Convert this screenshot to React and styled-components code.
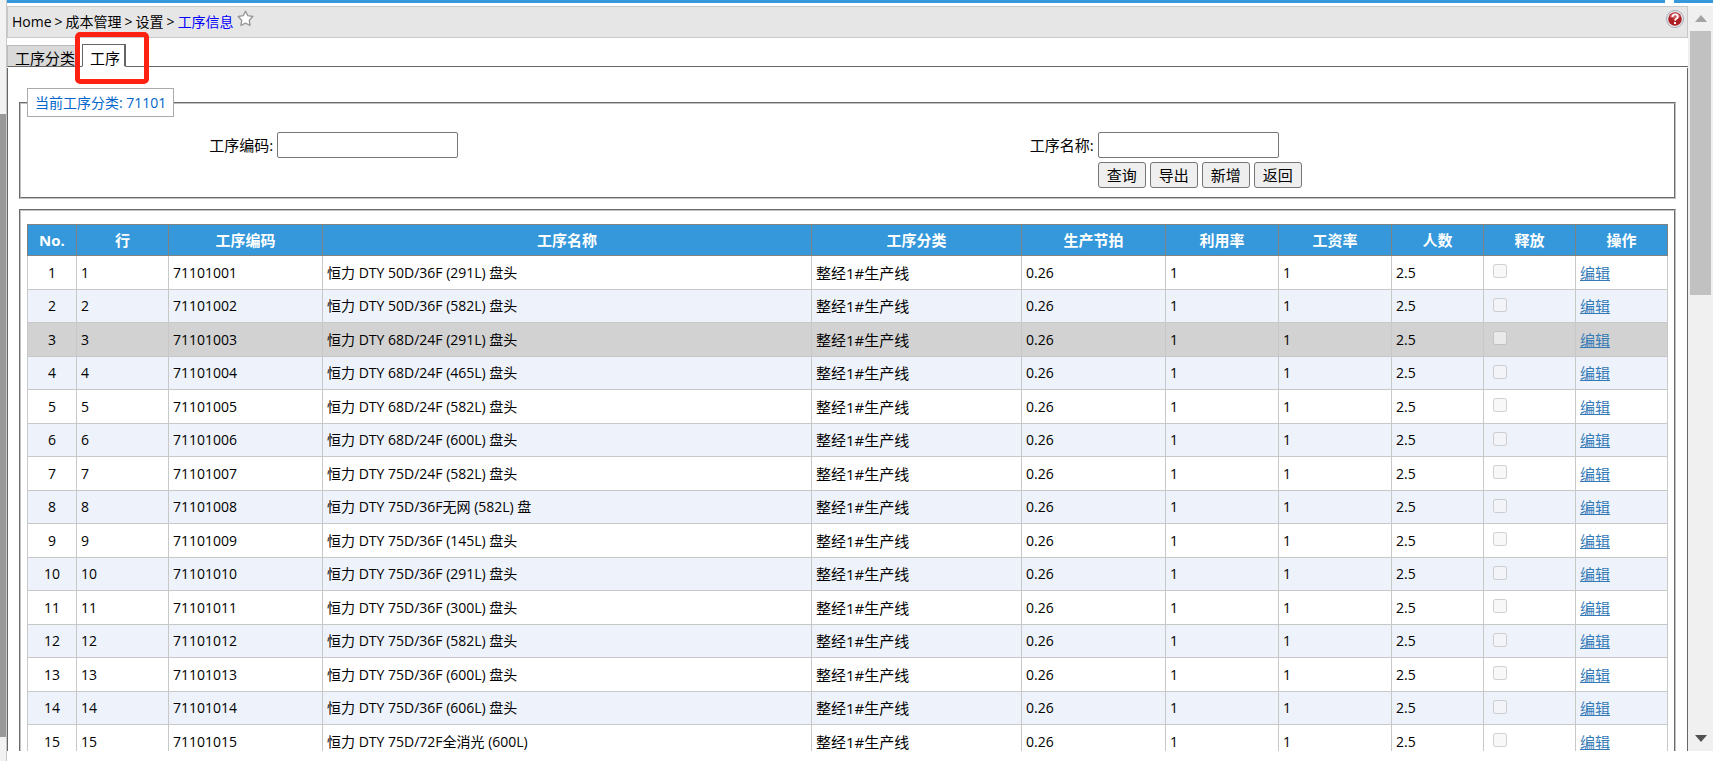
import React from "react";
import styled, { createGlobalStyle, css } from "styled-components";

const Global = createGlobalStyle`
  *, *::before, *::after { box-sizing: border-box; }
  body {
    margin: 0;
    background: #fff;
    color: #000;
    font: 15px/20px "Open Sans", "Noto Sans CJK SC", sans-serif;
    overflow: hidden;
  }
  button, input { font: inherit; color: inherit; }
`;

const Shell = styled.div`
  display: flex;
  height: 100vh;
`;

const SideRail = styled.div`
  flex: none;
  width: 7px;
  display: flex;
  flex-direction: column;
  background: #f2f2f2;
  border-right: 1px solid #c8c8c8;
  padding: 114px 0 24px;
`;

const SideThumb = styled.div`
  flex: 1;
  background: #999;
`;

const Main = styled.div`
  flex: 1;
  min-width: 0;
  display: flex;
  flex-direction: column;
  padding-bottom: 10px;
`;

const TopStrip = styled.div`
  flex: none;
  display: flex;
  gap: 9px;
  height: 3px;
  margin-bottom: 3px;
`;

const StripPart = styled.span`
  flex: ${(p) => (p.$end ? "0 0 39px" : "1")};
  background: #3498db;
`;

const Frame = styled.div`
  flex: 1;
  min-height: 0;
  display: flex;
`;

const Page = styled.div`
  flex: 1;
  min-width: 0;
  display: flex;
  flex-direction: column;
  overflow: hidden;
`;

const CrumbBar = styled.header`
  flex: none;
  display: flex;
  justify-content: space-between;
  height: 32px;
  padding: 3px 3px 3px 4px;
  background: #e6e6e6;
  border: 1px solid #c8c8c8;
`;

const Crumbs = styled.nav`
  display: flex;
  align-items: center;
  gap: 3px;
  font-size: 14px;
`;

const Crumb = styled.a`
  color: ${(p) => (p.$current ? "#00f" : "#000")};
  text-decoration: none;
`;

const IconButton = styled.button`
  display: flex;
  padding: 0;
  border: 0;
  background: none;
  align-self: flex-start;
`;

const Tabs = styled.div`
  flex: none;
  display: flex;
  align-items: flex-end;
  height: 29px;
  padding-top: 7px;
`;

const Tab = styled.button`
  height: 22px;
  padding: 4px 0 0 7px;
  border: 1px solid #bbb;
  border-bottom: 1px solid #666;
  background: #d9d9d9;
  white-space: nowrap;
  line-height: 16px;
  ${(p) =>
    p.$active &&
    css`
      height: 23px;
      padding: 4px 4px 0 7px;
      border: 1px solid #666;
      border-right-width: 2px;
      border-bottom-color: #fff;
      background: #fff;
    `}
`;

const TabGap = styled.span`
  width: ${(p) => (p.$wide ? "auto" : "6px")};
  flex: ${(p) => (p.$wide ? "1" : "none")};
  border-bottom: 1px solid #666;
`;

const ActiveMark = styled.span`
  position: relative;
  display: flex;

  &::after {
    content: "";
    position: absolute;
    inset: -12px -23px -17px -7px;
    border: 5px solid #ff2213;
    border-radius: 5px;
    pointer-events: none;
  }
`;

const Panel = styled.main`
  flex: 1;
  min-height: 0;
  margin-top: 1px;
  padding: 20px 11px 0;
  border: solid #666;
  border-width: 0 1px;
  overflow: hidden;
`;

const Group = styled.fieldset`
  min-width: 0;
  margin: 0 0 10px;
  padding: ${(p) => (p.$table ? "13px 6px" : "15px 6px 9px")};
  border: 2px groove #c0c0c0;
`;

const Legend = styled.legend`
  height: 29px;
  padding: 0 7px;
  border: 1px solid #aaa;
  color: #0066cc;
  font-size: 14px;
  line-height: 28px;
`;

const Search = styled.form`
  display: grid;
  grid-template-columns: 3fr 7fr 3fr 7fr;
  row-gap: 4px;
  align-items: center;
`;

const FieldLabel = styled.label`
  text-align: right;
`;

const TextInput = styled.input`
  width: 181px;
  height: 26px;
  margin: 0 0 0 4px;
  border: 1px solid #767676;
  border-radius: 2px;
  background: #fff;
`;

const Actions = styled.div`
  grid-column: 4;
  display: flex;
  gap: 4px;
  margin-left: 4px;
`;

const ActionButton = styled.button`
  width: 48px;
  height: 26px;
  padding: 0;
  border: 1px solid #767676;
  border-radius: 3px;
  background: #efefef;
  line-height: 24px;
`;

const Grid = styled.table`
  width: 100%;
  table-layout: fixed;
  border-collapse: collapse;
`;

const Col = styled.col`
  width: ${(p) => p.$w}px;
`;

const HeadCell = styled.th`
  height: 31px;
  padding: 0;
  border: 1px solid #808080;
  background: #3498db;
  color: #fff;
  font-weight: 700;
`;

const Row = styled.tr`
  height: 34px;
  background: #fff;
  &:nth-child(even) {
    height: 33px;
    background: #eef3fb;
  }
  ${(p) =>
    p.$selected &&
    css`
      background: #d2d2d2;
    `}
`;

const Cell = styled.td`
  padding: 0 4px;
  border: 1px solid #c8c8c8;
  text-align: ${(p) => (p.$center ? "center" : "left")};
  font-size: ${(p) => (p.$latin ? "14px" : "15px")};
  white-space: nowrap;
  overflow: hidden;
`;

const Release = styled.input`
  display: block;
  width: 14px;
  height: 14px;
  margin: 0 0 3px 5px;
`;

const EditLink = styled.a`
  color: #337ab7;
  text-decoration: underline;
`;

const ScrollBar = styled.div`
  flex: none;
  width: 25px;
  display: flex;
  flex-direction: column;
  align-items: center;
  background: #f0f0f0;
`;

const ScrollArrow = styled.button`
  display: flex;
  justify-content: center;
  width: 21px;
  height: 25px;
  padding: 9px 0 0;
  border: 0;
  background: none;
`;

const ScrollTrack = styled.div`
  flex: 1;
  width: 21px;
`;

const ScrollThumb = styled.div`
  height: 38%;
  background: #c1c1c1;
`;

const columns = [
  ["No.", 49], ["行", 92], ["工序编码", 154], ["工序名称", 489], ["工序分类", 210],
  ["生产节拍", 144], ["利用率", 113], ["工资率", 113], ["人数", 92], ["释放", 92], ["操作", 92],
];

const names = [
  "恒力 DTY 50D/36F (291L) 盘头",
  "恒力 DTY 50D/36F (582L) 盘头",
  "恒力 DTY 68D/24F (291L) 盘头",
  "恒力 DTY 68D/24F (465L) 盘头",
  "恒力 DTY 68D/24F (582L) 盘头",
  "恒力 DTY 68D/24F (600L) 盘头",
  "恒力 DTY 75D/24F (582L) 盘头",
  "恒力 DTY 75D/36F无网 (582L) 盘",
  "恒力 DTY 75D/36F (145L) 盘头",
  "恒力 DTY 75D/36F (291L) 盘头",
  "恒力 DTY 75D/36F (300L) 盘头",
  "恒力 DTY 75D/36F (582L) 盘头",
  "恒力 DTY 75D/36F (600L) 盘头",
  "恒力 DTY 75D/36F (606L) 盘头",
  "恒力 DTY 75D/72F全消光 (600L)",
];

const StarIcon = () => (
  <svg width="17" height="17" viewBox="0 0 17 17">
    <path d="M8.5 1.2 L10.8 5.600 L15.8 6.5 L12.300 10.2 L13 15.4 L8.5 13.200 L4 15.4 L4.700 10.2 L1.2 6.5 L6.2 5.600 Z" fill="#fff" stroke="#999" strokeWidth="1.400" strokeLinejoin="round" />
  </svg>
);

const HelpIcon = () => (
  <svg width="18" height="18" viewBox="0 0 18 18">
    <circle cx="9" cy="9" r="8.5" fill="#e4e8ee" stroke="#a9adb5" />
    <circle cx="9" cy="9" r="6.8" fill="#b01f24" />
    <path d="M3.5 7a5.8 5.8 0 0 1 11 0q-5.500 3-11 0z" fill="#d0585b" />
    <path d="M6.500 7q0-2.600 2.600-2.600t2.600 2.300q0 1.300-1.300 2t-1.400 1.900" fill="none" stroke="#fff" strokeWidth="1.900" />
    <rect x="8" y="12" width="2" height="2" fill="#fff" />
  </svg>
);

export default function App() {
  return (
    <>
      <Global />
      <Shell>
        <SideRail><SideThumb /></SideRail>
        <Main>
          <TopStrip><StripPart /><StripPart $end /></TopStrip>
          <Frame>
            <Page>
              <CrumbBar>
                <Crumbs>
                  <Crumb href="#">Home</Crumb>
                  <span>&gt;</span>
                  <Crumb href="#">成本管理</Crumb>
                  <span>&gt;</span>
                  <Crumb href="#">设置</Crumb>
                  <span>&gt;</span>
                  <Crumb href="#" $current>工序信息</Crumb>
                  <IconButton type="button" aria-label="收藏"><StarIcon /></IconButton>
                </Crumbs>
                <IconButton type="button" aria-label="帮助"><HelpIcon /></IconButton>
              </CrumbBar>
              <Tabs>
                <Tab type="button">工序分类</Tab>
                <TabGap />
                <ActiveMark><Tab type="button" $active>工序</Tab></ActiveMark>
                <TabGap $wide />
              </Tabs>
              <Panel>
                <Group>
                  <Legend>当前工序分类: 71101</Legend>
                  <Search onSubmit={(e) => e.preventDefault()}>
                    <FieldLabel htmlFor="code">工序编码:</FieldLabel>
                    <TextInput id="code" />
                    <FieldLabel htmlFor="name">工序名称:</FieldLabel>
                    <TextInput id="name" />
                    <Actions>
                      {["查询", "导出", "新增", "返回"].map((t) => (
                        <ActionButton type="button" key={t}>{t}</ActionButton>
                      ))}
                    </Actions>
                  </Search>
                </Group>
                <Group $table>
                  <Grid>
                    <colgroup>
                      {columns.map(([t, w]) => <Col key={t} $w={w} />)}
                    </colgroup>
                    <thead>
                      <tr>{columns.map(([t]) => <HeadCell key={t}>{t}</HeadCell>)}</tr>
                    </thead>
                    <tbody>
                      {names.map((name, i) => (
                        <Row key={name} $selected={i === 2}>
                          <Cell $latin $center>{i + 1}</Cell>
                          <Cell $latin>{i + 1}</Cell>
                          <Cell $latin>{71101001 + i}</Cell>
                          <Cell $latin>{name}</Cell>
                          <Cell>整经1#生产线</Cell>
                          <Cell $latin>0.26</Cell>
                          <Cell $latin>1</Cell>
                          <Cell $latin>1</Cell>
                          <Cell $latin>2.5</Cell>
                          <Cell><Release type="checkbox" disabled aria-label="释放" /></Cell>
                          <Cell><EditLink href="#">编辑</EditLink></Cell>
                        </Row>
                      ))}
                    </tbody>
                  </Grid>
                </Group>
              </Panel>
            </Page>
            <ScrollBar>
              <ScrollArrow type="button" aria-label="向上滚动">
                <svg width="12" height="7"><path d="M0 7L6 0L12 7z" fill="#a3a3a3" /></svg>
              </ScrollArrow>
              <ScrollTrack><ScrollThumb /></ScrollTrack>
              <ScrollArrow type="button" aria-label="向下滚动">
                <svg width="12" height="7"><path d="M0 0L6 7L12 0z" fill="#505050" /></svg>
              </ScrollArrow>
            </ScrollBar>
          </Frame>
        </Main>
      </Shell>
    </>
  );
}
